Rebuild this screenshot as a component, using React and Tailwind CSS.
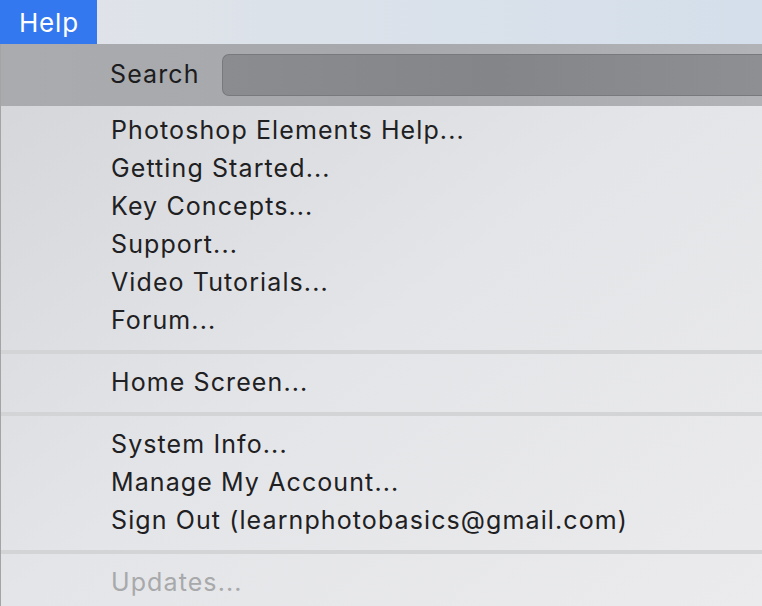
export default function App() {
  const group1 = [
    "Photoshop Elements Help...",
    "Getting Started...",
    "Key Concepts...",
    "Support...",
    "Video Tutorials...",
    "Forum...",
  ];
  const group3 = [
    "System Info...",
    "Manage My Account...",
    "Sign Out (learnphotobasics@gmail.com)",
  ];
  const Item = ({ children, disabled }) => (
    <div
      className={`h-[38px] flex items-center pl-[110px] text-[25px] tracking-[1.1px] whitespace-nowrap ${
        disabled ? "text-[#a8a9ab]" : "text-[#202022]"
      }`}
    >
      {children}
    </div>
  );
  const Sep = () => (
    <div className="py-[10px]">
      <div className="h-[4px] bg-[#d3d4d6]" />
    </div>
  );
  return (
    <div
      className="w-[762px] h-[606px] overflow-hidden flex flex-col bg-[#e6e7e9]"
      style={{ fontFamily: "Inter, 'Liberation Sans', sans-serif" }}
    >
      <div className="h-[44px] shrink-0 flex bg-gradient-to-r from-[#e1e4e9] to-[#d4dfeb]">
        <div className="w-[97px] h-full bg-[#3478ef] text-white text-[26px] tracking-[0.8px] flex items-center pl-[19px]">
          Help
        </div>
      </div>
      <div className="flex-1 flex flex-col border-l border-[#a3a4a6] bg-gradient-to-br from-[#d3d5d8] via-[#e4e5e8] to-[#ebebed]">
        <div className="h-[62px] shrink-0 flex items-center bg-gradient-to-r from-[#a9abae] via-[#a6a8ab] to-[#b1b3b6]">
          <div className="w-[221px] pl-[109px] text-[25px] tracking-[1.1px] text-[#1c1c1e]">Search</div>
          <div className="flex-1 h-[42px] rounded-l-[7px] border border-r-0 border-[#77797c] bg-gradient-to-r from-[#8a8c8f] via-[#838588] to-[#8d8f92]" />
        </div>
        <div className="pt-[6px]">
          {group1.map((t) => (
            <Item key={t}>{t}</Item>
          ))}
          <Sep />
          <Item>Home Screen...</Item>
          <Sep />
          {group3.map((t) => (
            <Item key={t}>{t}</Item>
          ))}
          <Sep />
          <Item disabled>Updates...</Item>
        </div>
      </div>
    </div>
  );
}
